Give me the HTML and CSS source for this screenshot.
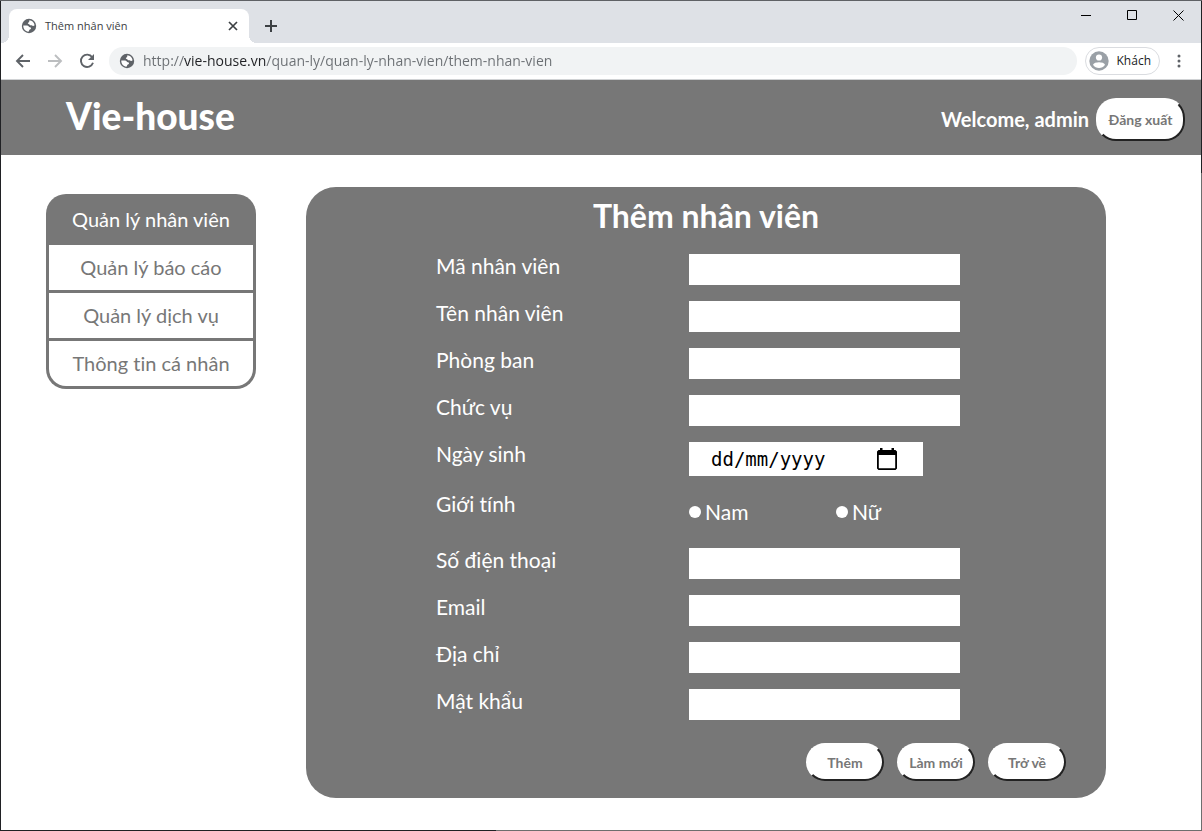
FILE: index.html
```html
<!DOCTYPE html>
<html lang="vi">
<head>
<meta charset="utf-8">
<meta name="viewport" content="width=device-width, initial-scale=1">
<title>Thêm nhân viên</title>
<link rel="stylesheet" href="styles.css">
</head>
<body>
<svg class="defs" aria-hidden="true">
  <symbol id="globe" viewBox="0 0 16 16">
    <circle cx="8" cy="8" r="7.2" fill="#5f6368"/>
    <path d="M8.300 2.300c2.900.2 5 2.400 5.300 5-.7.900-1.900 1-2.600.3-.6-.7-1.100-.2-1.900-.4-.9-.3-.4-1-1.400-1.100-.9-.1-1.200-1.200-.2-1.600.9-.3.800-1.200.8-2.200zM2.300 7.600h3.700c1.500 0 1.700 1.600 2.900 1.700 1.500.1 1.500 2 .1 2.200-1.100.2-.7 1.700-1.700 2.200C4.500 13.600 2.100 11 2.300 7.600z" fill="#fff"/>
  </symbol>
</svg>
<div class="window">
  <div class="tabstrip">
    <div class="tab">
      <svg class="globe"><use href="#globe"/></svg>
      <span class="tab-title">Thêm nhân viên</span>
      <button class="icon-button" aria-label="Đóng thẻ"><svg width="10" height="10" viewBox="0 0 10 10"><path d="M1 1l8 8M9 1l-8 8" stroke="#3c4043" stroke-width="1.700"/></svg></button>
    </div>
    <button class="icon-button new-tab" aria-label="Thẻ mới"><svg width="12" height="12" viewBox="0 0 12 12"><path d="M6 0v12M0 6h12" stroke="#3c4043" stroke-width="2"/></svg></button>
    <div class="window-controls">
      <button class="icon-button" aria-label="Thu nhỏ"><svg width="10" height="10" viewBox="0 0 10 10"><path d="M0 5.500h10" stroke="#000"/></svg></button>
      <button class="icon-button" aria-label="Phóng to"><svg width="10" height="10" viewBox="0 0 10 10"><path d="M.5.5h9v9h-9z" fill="none" stroke="#000"/></svg></button>
      <button class="icon-button" aria-label="Đóng"><svg width="11" height="11" viewBox="0 0 11 11"><path d="M.5.5l10 10M10.500.5l-10 10" stroke="#000"/></svg></button>
    </div>
  </div>
  <div class="toolbar">
    <div class="nav-buttons">
      <button class="icon-button" aria-label="Quay lại"><svg width="16" height="16" viewBox="0 0 16 16"><path d="M15 8H2.500M8 2L2 8l6 6" fill="none" stroke="#5f6368" stroke-width="1.900"/></svg></button>
      <button class="icon-button" aria-label="Tiến"><svg width="16" height="16" viewBox="0 0 16 16"><path d="M1 8h12.500M8 2l6 6-6 6" fill="none" stroke="#bcbec0" stroke-width="1.900"/></svg></button>
      <button class="icon-button" aria-label="Tải lại"><svg width="16" height="16" viewBox="0 0 16 16"><path d="M13.200 4.200A6.200 6.200 0 1 0 14 9.800" fill="none" stroke="#5f6368" stroke-width="1.900"/><path d="M15 1v6H9z" fill="#5f6368"/></svg></button>
    </div>
    <div class="address">
      <svg class="globe"><use href="#globe"/></svg>
      <input class="url" type="text" aria-label="Địa chỉ trang" value="http://vie-house.vn/quan-ly/quan-ly-nhan-vien/them-nhan-vien">
    </div>
    <button class="profile"><svg width="20" height="20" viewBox="0 0 20 20"><circle cx="10" cy="10" r="9.700" fill="#9aa0a6"/><circle cx="10" cy="6.500" r="3.100" fill="#fff"/><path d="M4 13.700c1-3.300 11-3.300 12 0-2.700 4.300-9.300 4.300-12 0z" fill="#fff"/></svg>Khách</button>
    <button class="icon-button more" aria-label="Tùy chọn"><svg width="4" height="14" viewBox="0 0 4 14" fill="#5f6368"><circle cx="2" cy="2" r="1.500"/><circle cx="2" cy="7" r="1.500"/><circle cx="2" cy="12" r="1.500"/></svg></button>
  </div>

  <header class="site-header">
    <h1 class="brand">Vie-house</h1>
    <div class="account">
      <span class="welcome">Welcome, admin</span>
      <button class="pill pill-logout">Đăng xuất</button>
    </div>
  </header>

  <div class="content">
    <nav class="menu">
      <a class="menu-item menu-active" href="#nhan-vien">Quản lý nhân viên</a>
      <a class="menu-item" href="#bao-cao">Quản lý báo cáo</a>
      <a class="menu-item" href="#dich-vu">Quản lý dịch vụ</a>
      <a class="menu-item" href="#ca-nhan">Thông tin cá nhân</a>
    </nav>
    <main class="panel">
      <h2 class="panel-title">Thêm nhân viên</h2>
      <form>
        <div class="fields">
          <label for="ma">Mã nhân viên</label><input class="field" id="ma" type="text">
          <label for="ten">Tên nhân viên</label><input class="field" id="ten" type="text">
          <label for="phong">Phòng ban</label><input class="field" id="phong" type="text">
          <label for="chuc">Chức vụ</label><input class="field" id="chuc" type="text">
          <label for="ngay">Ngày sinh</label>
          <div class="date">
            <input class="date-text" id="ngay" type="text" value="dd/mm/yyyy">
            <button class="icon-button" type="button" aria-label="Chọn ngày"><svg width="20" height="22" viewBox="0 0 20 22"><path d="M3 0h2.500v2h9V0H17v2h1.500L20 3.500v17L18.500 22h-17L0 20.500v-17L1.500 2H3zM1.800 7v13.200h16.400V7z" fill="#000" fill-rule="evenodd"/></svg></button>
          </div>
          <span class="label" id="gioi">Giới tính</span>
          <div class="gender" role="radiogroup" aria-labelledby="gioi">
            <label class="option"><input class="radio" type="radio" name="gioi" value="nam">Nam</label>
            <label class="option"><input class="radio" type="radio" name="gioi" value="nu">Nữ</label>
          </div>
          <label for="sdt">Số điện thoại</label><input class="field" id="sdt" type="tel">
          <label for="email">Email</label><input class="field" id="email" type="email">
          <label for="diachi">Địa chỉ</label><input class="field" id="diachi" type="text">
          <label for="matkhau">Mật khẩu</label><input class="field" id="matkhau" type="password">
        </div>
        <div class="actions">
          <button class="pill" type="submit">Thêm</button>
          <button class="pill" type="reset">Làm mới</button>
          <button class="pill" type="button">Trở về</button>
        </div>
      </form>
    </main>
  </div>
</div>
</body>
</html>
```
FILE: styles.css
```css
* { box-sizing: border-box; }

body {
  margin: 0;
  font-family: Lato, "Open Sans", sans-serif;
  font-variant-ligatures: none;
  background: #fff;
}

button, input { font-family: inherit; }

.defs { position: absolute; width: 0; height: 0; }

/* One-pixel window frame, dark on the left and partly on the right and bottom */
.window {
  min-height: 100vh;
  padding: 1px;
  background:
    linear-gradient(#5f6165, #5f6165) top / 100% 1px no-repeat,
    linear-gradient(#202124, #202124) left / 1px 100% no-repeat,
    linear-gradient(#202124 173px, #6e6e6e 173px) right / 1px 100% no-repeat,
    linear-gradient(to right, #202124 496px, #6e6e6e 496px) bottom / 100% 1px no-repeat,
    #fff;
}

.icon-button {
  display: flex;
  align-items: center;
  justify-content: center;
  padding: 0;
  border: 0;
  background: none;
}

.globe { width: 16px; height: 16px; flex: none; }

.tabstrip {
  display: flex;
  height: 42px;
  padding-left: 8px;
  background: #dee1e6;
}

.tab {
  position: relative;
  display: flex;
  align-items: center;
  gap: 8px;
  width: 240px;
  margin-top: 8px;
  padding: 0 11px 0 12px;
  border-radius: 8px 8px 0 0;
  background: #fff;
}

/* Flared feet of the active tab */
.tab::before,
.tab::after {
  content: "";
  position: absolute;
  bottom: 0;
  width: 8px;
  height: 8px;
}

.tab::before {
  right: 100%;
  background: radial-gradient(circle at 0 0, transparent 8px, #fff 8px);
}

.tab::after {
  left: 100%;
  background: radial-gradient(circle at 100% 0, transparent 8px, #fff 8px);
}

.tab-title {
  flex: 1;
  font: 11px/16px "Open Sans", sans-serif;
  color: #3c4043;
}

.new-tab { margin: 8px 0 0 16px; }

.window-controls {
  display: flex;
  margin-left: auto;
}

.window-controls .icon-button { width: 46px; height: 28px; }

.toolbar {
  display: flex;
  align-items: center;
  height: 37px;
  padding: 0 20px 0 14px;
  border-bottom: 1px solid #d0d2d4;
  background: #fff;
}

.nav-buttons {
  display: flex;
  gap: 16px;
}

.address {
  display: flex;
  flex: 1;
  align-items: center;
  gap: 8px;
  height: 28px;
  margin: 0 8px 0 14px;
  padding: 0 10px;
  border-radius: 14px;
  background: #f1f3f4;
}

/* The gradient tints the host name darker than the rest of the address */
.url {
  flex: 1;
  min-width: 0;
  padding: 0;
  border: 0;
  font: 14px/20px "Open Sans", sans-serif;
  color: #5f6368;
  background: linear-gradient(to right, #6b6f73 41px, #202124 41px, #202124 123px, #6b6f73 123px);
  -webkit-background-clip: text;
  background-clip: text;
  -webkit-text-fill-color: transparent;
}

.profile {
  display: flex;
  align-items: center;
  gap: 8px;
  height: 28px;
  padding: 0 8px 0 3px;
  border: 1px solid #dadce0;
  border-radius: 14px;
  font: 12px/16px "Open Sans", sans-serif;
  color: #202124;
  background: #fff;
}

.more { margin-left: 17px; }

.site-header {
  display: flex;
  align-items: center;
  justify-content: space-between;
  height: 75px;
  padding: 0 16px 0 65px;
  color: #fff;
  background: #777;
}

.brand {
  margin: 0;
  padding-bottom: 4px;
  font-size: 37px;
  font-weight: 900;
  line-height: 44px;
}

.account {
  display: flex;
  align-items: center;
  gap: 7px;
  padding-top: 3px;
}

.welcome {
  font-size: 20px;
  font-weight: 700;
}

.pill {
  min-width: 78px;
  height: 38px;
  padding: 0 8px;
  border: 2px solid;
  border-color: #fff #222 #222 #fff;
  border-radius: 20px;
  font-size: 14px;
  font-weight: 700;
  color: #777;
  background: #fff;
}

.pill-logout {
  min-width: 89px;
  height: 43px;
}

.content {
  display: flex;
  align-items: flex-start;
  gap: 50px;
  padding: 32px 95px 32px 45px;
}

.menu {
  flex: none;
  width: 210px;
  margin-top: 7px;
  padding: 3px;
  border-radius: 20px;
  background: #777;
}

.menu-item {
  display: block;
  margin-top: 3px;
  font-size: 20px;
  line-height: 45px;
  text-align: center;
  text-decoration: none;
  color: #777;
  background: #fff;
}

.menu-item:last-child { border-radius: 0 0 17px 17px; }

.menu-active {
  margin-top: 0;
  color: #fff;
  background: none;
}

.panel {
  flex: 1;
  padding: 7px 40px 17px 130px;
  border-radius: 30px;
  color: #fff;
  background: #777;
}

.panel-title {
  margin: 0 0 16px;
  padding-right: 90px;
  font-size: 32px;
  line-height: 44px;
  text-align: center;
}

.fields {
  display: grid;
  grid-template-columns: 253px 271px;
  row-gap: 16px;
  align-items: start;
  font-size: 21px;
  line-height: 24px;
}

.field {
  width: 100%;
  height: 31px;
  padding: 0 8px;
  border: 0;
  font-size: 20px;
  background: #fff;
}

.date {
  display: flex;
  align-items: center;
  width: 234px;
  height: 34px;
  padding: 0 26px 0 22px;
  background: #fff;
}

.date-text {
  flex: 1;
  min-width: 0;
  padding: 0;
  border: 0;
  font: 19px/24px "DejaVu Sans Mono", monospace;
  color: #000;
  background: none;
}

.gender {
  display: grid;
  grid-template-columns: 147px 1fr;
  align-items: center;
  height: 40px;
}

.option {
  display: flex;
  align-items: center;
  gap: 4px;
}

.radio {
  appearance: none;
  width: 12px;
  height: 12px;
  margin: 0;
  border-radius: 50%;
  background: #fff;
}

.radio:checked { border: 3px solid #fff; background: #777; }

.actions {
  display: flex;
  justify-content: flex-end;
  gap: 13px;
  margin-top: 23px;
}
```
